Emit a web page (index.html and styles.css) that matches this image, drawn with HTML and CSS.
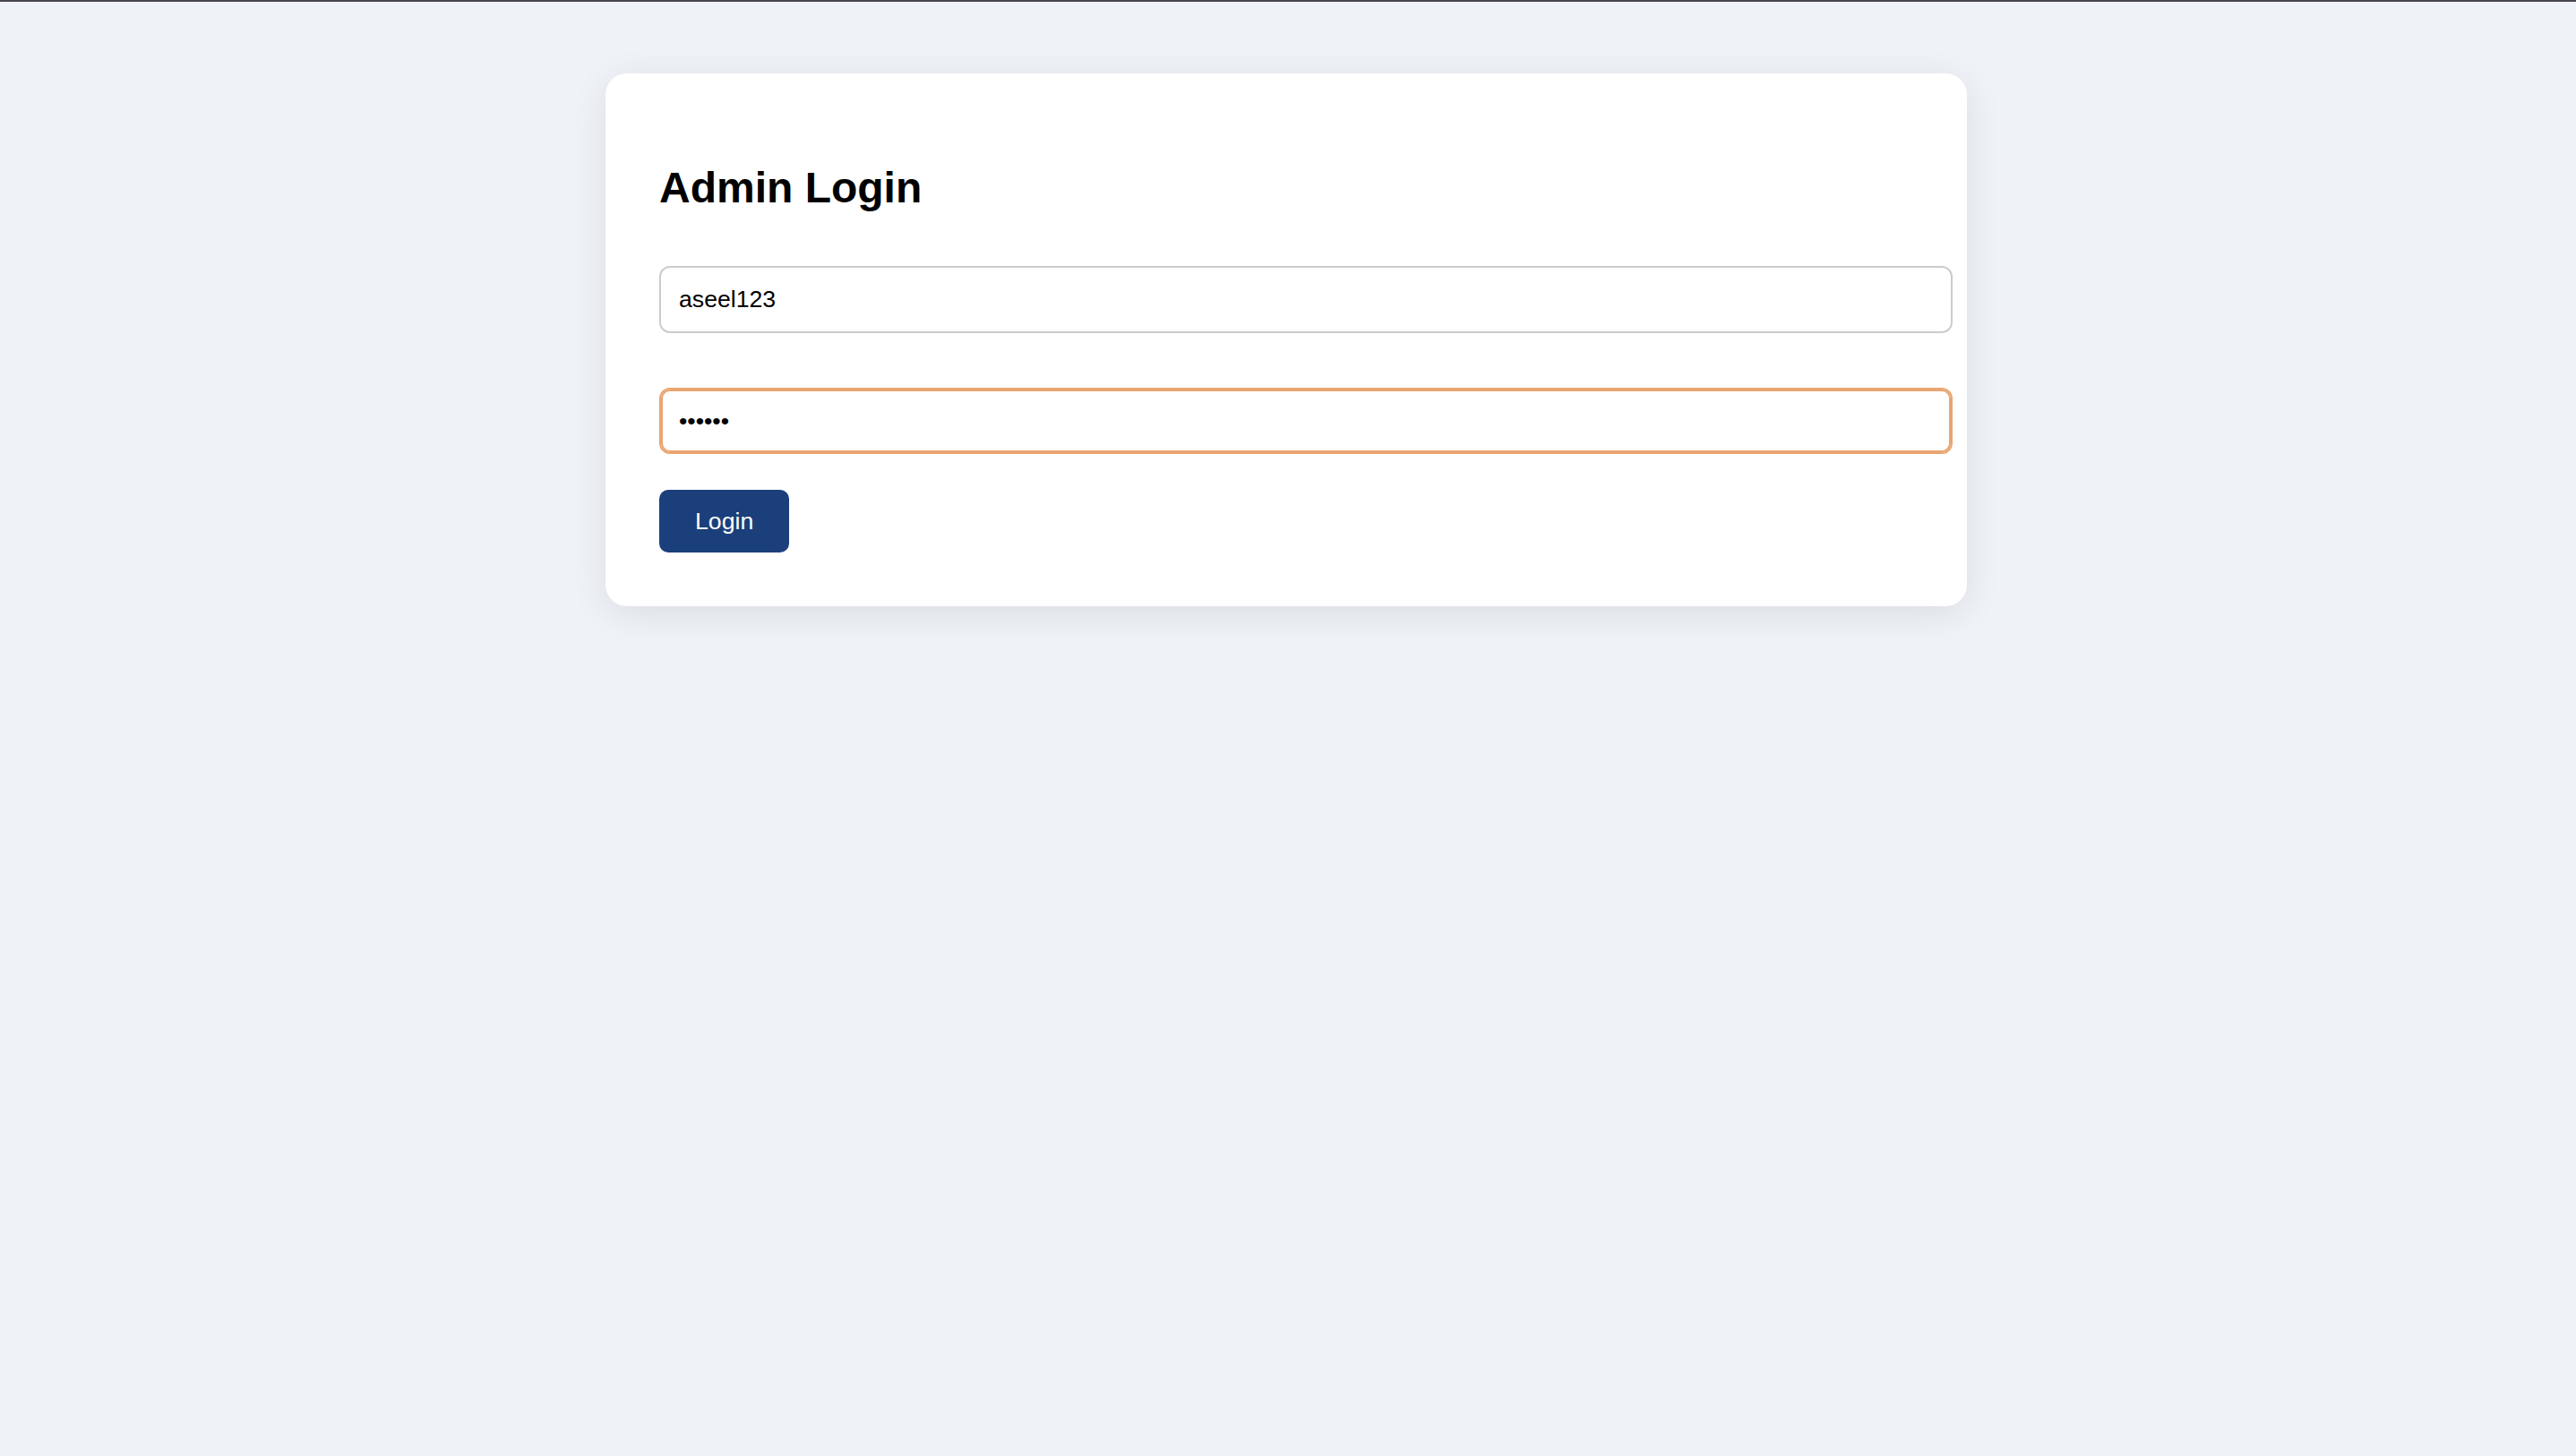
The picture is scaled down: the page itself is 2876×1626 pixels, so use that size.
FILE: index.html
```html
<!DOCTYPE html>
<html lang="en">
<head>
<meta charset="utf-8">
<title>Admin Login</title>
<link rel="stylesheet" href="styles.css">
</head>
<body>
<div class="topbar"></div>
<main class="page">
  <section class="card">
    <h2 class="title">Admin Login</h2>
    <form class="form">
      <input class="field" type="text" value="aseel123">
      <input class="field field-focus" type="password" value="123456">
      <button class="btn" type="button">Login</button>
    </form>
  </section>
</main>
</body>
</html>
```

FILE: styles.css
```css
html, body {
  margin: 0;
  padding: 0;
}
body {
  background: #eff2f7;
  font-family: "Liberation Sans", Arial, Helvetica, sans-serif;
  min-height: 100vh;
}
.topbar {
  height: 2px;
  background: #47464e;
}
.page {
  padding: 80px 4px 200px 0;
}
.card {
  width: 1520px;
  box-sizing: border-box;
  margin: 0 auto;
  background: #ffffff;
  border-radius: 24px;
  padding: 60px;
  box-shadow: 0 8px 40px rgba(0, 0, 0, 0.09);
}
.title {
  margin: 40px 0 0;
  font-size: 48px;
  font-weight: 700;
  line-height: 55px;
  color: #000;
}
.form {
  display: flex;
  flex-direction: column;
  align-items: flex-start;
  padding-top: 60px;
}
.field {
  width: 100%;
  box-sizing: content-box;
  margin: 0;
  padding: 20px;
  border: 2px solid #cccccc;
  border-radius: 12px;
  background: #fff;
  font-family: "Liberation Sans", Arial, Helvetica, sans-serif;
  font-size: 26.67px;
  line-height: 30.7px;
  height: 30.7px;
  color: #000;
  outline: none;
}
.field + .field {
  margin-top: 61px;
}
.field-focus {
  border-color: #e9a572;
  box-shadow: inset 0 0 0 2px #e9a572;
}
.btn {
  margin-top: 40px;
  padding: 20px 40px;
  border: none;
  border-radius: 10px;
  background: #1b3f7b;
  color: #fff;
  font-family: "Liberation Sans", Arial, Helvetica, sans-serif;
  font-size: 26.67px;
  line-height: 30px;
  cursor: pointer;
}
```
